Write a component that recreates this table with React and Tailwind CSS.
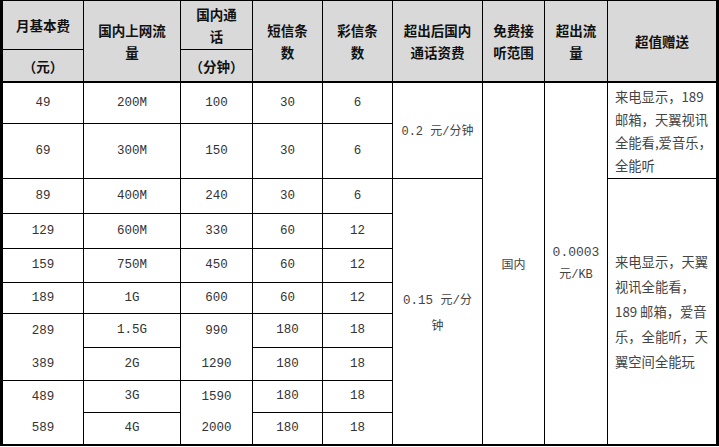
import React from "react";

const CJK = "font-['Noto_Sans_CJK_SC',sans-serif]";
const MONO = "font-['Liberation_Mono','Noto_Sans_CJK_SC',monospace]";

const rowStart = {
  1: "row-start-1", 2: "row-start-2", 3: "row-start-3", 4: "row-start-4",
  5: "row-start-5", 6: "row-start-6", 7: "row-start-7", 8: "row-start-8",
  9: "row-start-9", 10: "row-start-10", 11: "row-start-11", 12: "row-start-12",
};
const colStart = {
  1: "col-start-1", 2: "col-start-2", 3: "col-start-3", 4: "col-start-4",
  5: "col-start-5", 6: "col-start-6", 7: "col-start-7", 8: "col-start-8", 9: "col-start-9",
};
const rowSpan = { 1: "row-span-1", 2: "row-span-2", 8: "row-span-8", 10: "row-span-10" };

function Cell({ c, r, rs = 1, children, className = "", noBottom = false, thickBottom = false }) {
  const right = c === 9 ? "" : "border-r border-r-black";
  const bottom = noBottom ? "" : thickBottom ? "border-b-2 border-b-black" : "border-b border-b-black";
  return (
    <div className={`${colStart[c]} ${rowStart[r]} ${rowSpan[rs]} ${right} ${bottom} flex items-center justify-center text-center ${className}`}>
      {children}
    </div>
  );
}

function H({ c, r, rs = 1, children, thickBottom = false }) {
  return (
    <Cell c={c} r={r} rs={rs} thickBottom={thickBottom} className="bg-[#d9d9d9] font-bold text-[13.5px] leading-[22px] text-[#111]">
      <div>{children}</div>
    </Cell>
  );
}

const rows = [
  ["49", "200M", "100", "30", "6"],
  ["69", "300M", "150", "30", "6"],
  ["89", "400M", "240", "30", "6"],
  ["129", "600M", "330", "60", "12"],
  ["159", "750M", "450", "60", "12"],
  ["189", "1G", "600", "60", "12"],
  ["289", "1.5G", "990", "180", "18"],
  ["389", "2G", "1290", "180", "18"],
  ["489", "3G", "1590", "180", "18"],
  ["589", "4G", "2000", "180", "18"],
];

export default function App() {
  const body = [];
  rows.forEach((row, i) => {
    const r = i + 3;
    const last = r === 12;
    row.forEach((v, j) => {
      const c = j + 1;
      const merged = (c === 1 || c === 3) && (r === 9 || r === 11);
      body.push(
        <Cell key={`${r}-${c}`} c={c} r={r} noBottom={merged} thickBottom={last} className={`${MONO} text-[12.5px] text-[#333]`}>
          {v}
        </Cell>
      );
    });
  });

  return (
    <div className={`w-[719px] h-[447px] bg-white ${CJK}`}>
      <div className="w-[719px] border-t border-l-[3px] border-r-[3px] border-black grid grid-cols-[81px_97px_72px_70px_70px_90px_62px_63px_108px] grid-rows-[49px_33px_41px_55px_35px_35px_34px_31px_34px_33px_32px_33px]">
        <H c={1} r={1}>月基本费</H>
        <H c={1} r={2} thickBottom>（元）</H>
        <H c={2} r={1} rs={2} thickBottom>国内上网流<br />量</H>
        <H c={3} r={1}>国内通<br />话</H>
        <H c={3} r={2} thickBottom>（分钟）</H>
        <H c={4} r={1} rs={2} thickBottom>短信条<br />数</H>
        <H c={5} r={1} rs={2} thickBottom>彩信条<br />数</H>
        <H c={6} r={1} rs={2} thickBottom>超出后国内<br />通话资费</H>
        <H c={7} r={1} rs={2} thickBottom>免费接<br />听范围</H>
        <H c={8} r={1} rs={2} thickBottom>超出流<br />量</H>
        <H c={9} r={1} rs={2} thickBottom>超值赠送</H>

        {body}

        <Cell c={6} r={3} rs={2} className="text-[12px] text-[#444]">
          <div className="whitespace-nowrap">
            <span className={`${MONO} text-[12px]`}>0.2 </span>元<span className={`${MONO} text-[12px]`}>/</span>分钟
          </div>
        </Cell>
        <Cell c={6} r={5} rs={8} thickBottom className="text-[12px] text-[#444] leading-[23px]">
          <div>
            <div className="whitespace-nowrap">
              <span className={`${MONO} text-[12.5px]`}>0.15 </span>元<span className={`${MONO} text-[12.5px]`}>/</span>分
            </div>
            <div>钟</div>
          </div>
        </Cell>
        <Cell c={7} r={3} rs={10} thickBottom className="text-[12px] text-[#444]">
          国内
        </Cell>
        <Cell c={8} r={3} rs={10} thickBottom className="text-[12px] text-[#444] leading-[20px]">
          <div>
            <div className={`${MONO} text-[13px]`}>0.0003</div>
            <div className="whitespace-nowrap">
              元<span className={`${MONO} text-[12px]`}>/KB</span>
            </div>
          </div>
        </Cell>
        <Cell c={9} r={3} rs={2} className="justify-start text-left text-[13.3px] leading-[23px] text-[#444] pl-[7px]">
          <div className="whitespace-nowrap">
            <div>来电显示，189</div>
            <div>邮箱，天翼视讯</div>
            <div>全能看,爱音乐，</div>
            <div>全能听</div>
          </div>
        </Cell>
        <Cell c={9} r={5} rs={8} thickBottom className="justify-start text-left text-[13.3px] leading-[25px] text-[#444] pl-[7px]">
          <div className="whitespace-nowrap">
            <div>来电显示，天翼</div>
            <div>视讯全能看，</div>
            <div>189 邮箱，爱音</div>
            <div>乐，全能听，天</div>
            <div>翼空间全能玩</div>
          </div>
        </Cell>
      </div>
    </div>
  );
}
